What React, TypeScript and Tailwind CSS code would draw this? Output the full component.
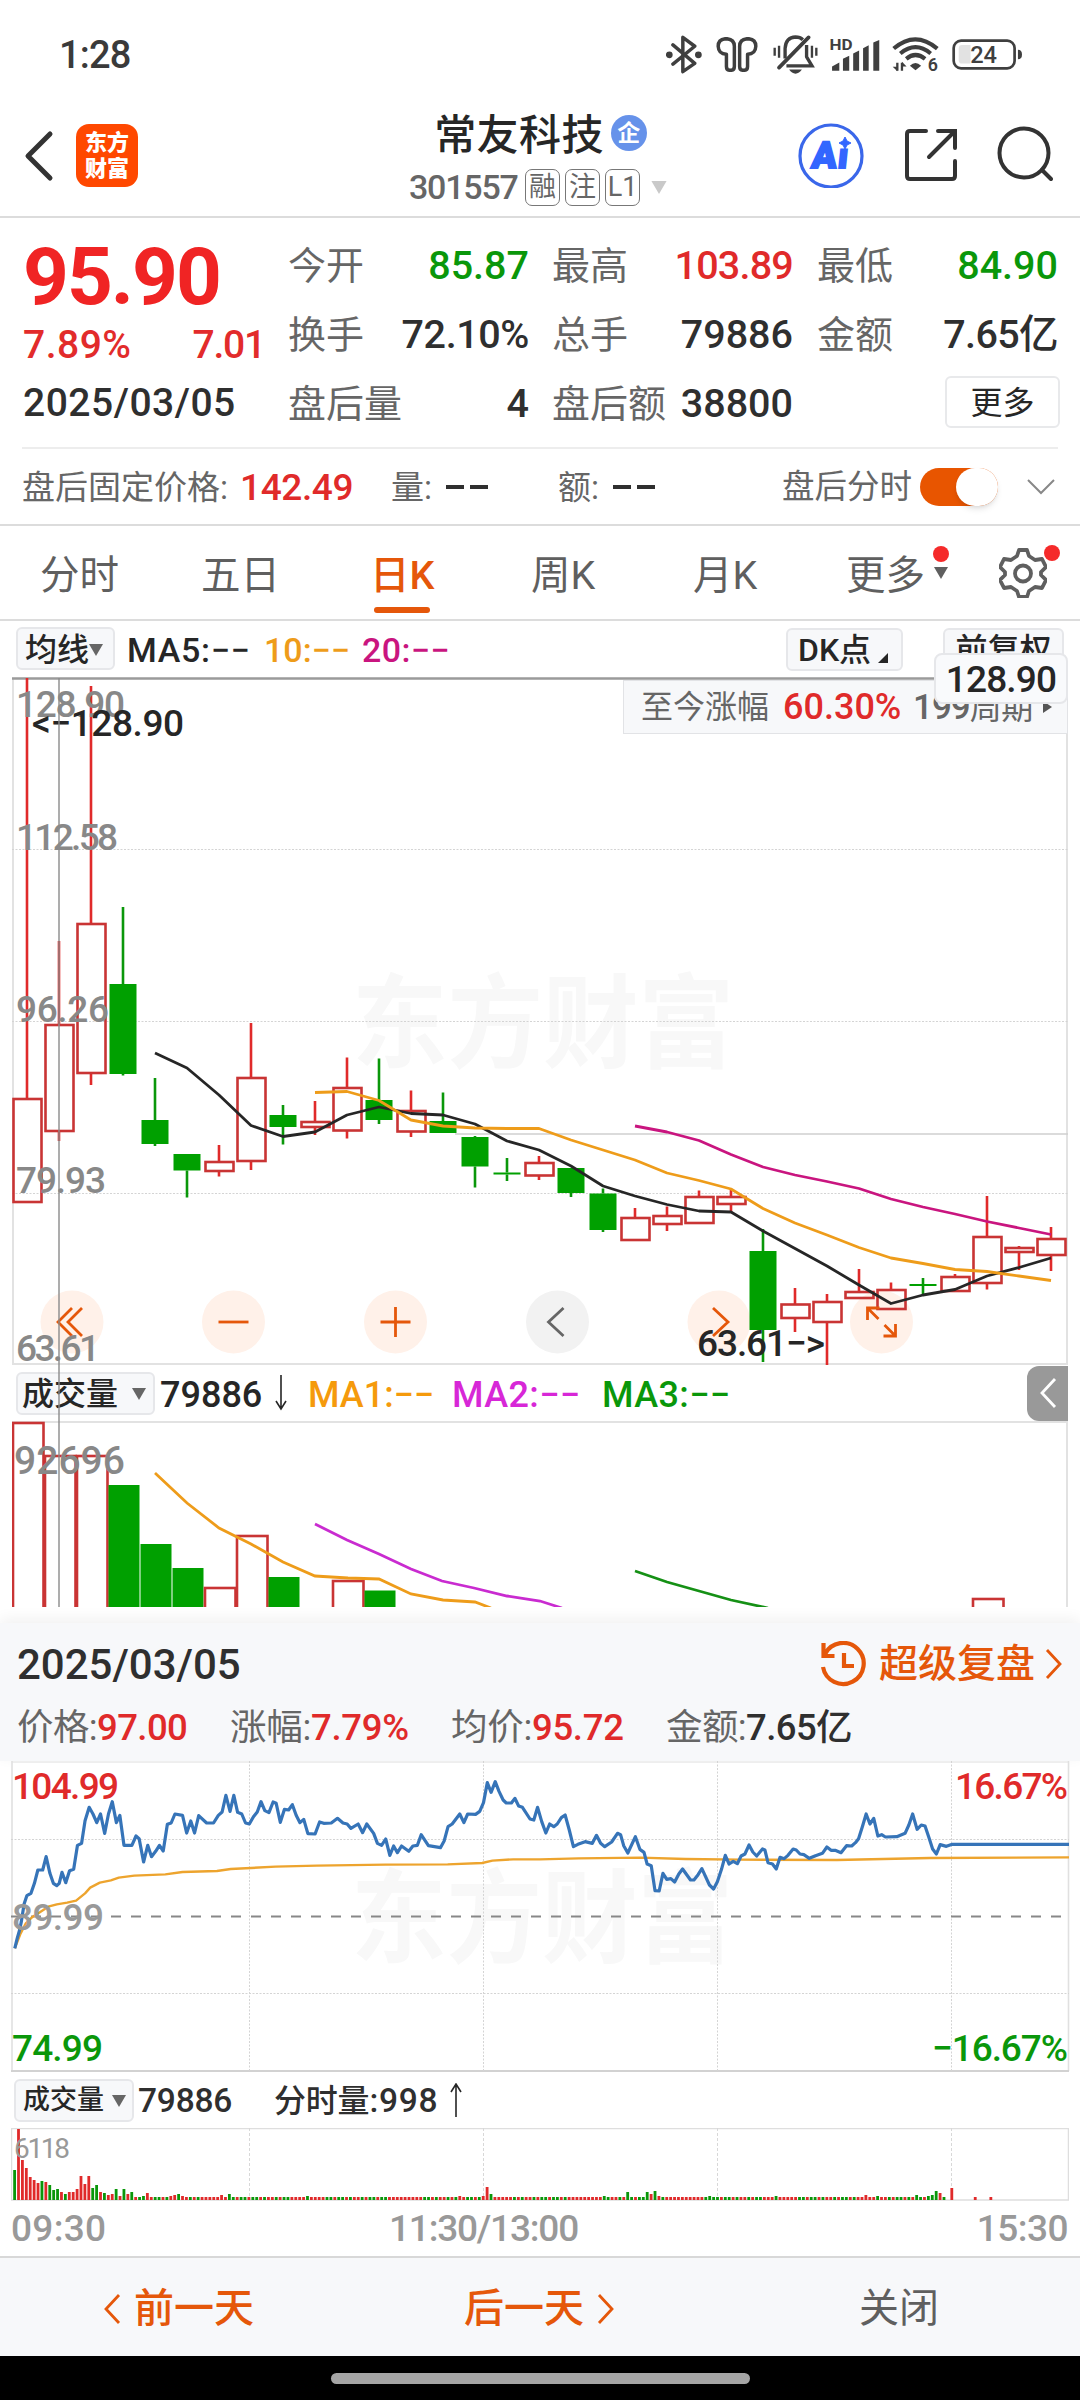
import type { ReactNode } from "react";
import { clsx } from "clsx";

const RED = "#e02a2a";
const GREEN = "#0a970a";

type Trend = "r" | "g";

// trend, high, body top, body bottom, low (px from the top of the plot)
const candles: [Trend, number, number, number, number][] = [
  ["r", 0, 421, 524, 524],
  ["r", 263, 347, 453, 463],
  ["r", 8, 246, 395, 407],
  ["g", 229, 306, 396, 397.5],
  ["g", 400, 442, 466, 468],
  ["g", 476, 476, 492.5, 519.5],
  ["r", 467, 484, 493, 498.5],
  ["r", 345, 400, 483, 492],
  ["g", 427, 437, 449, 466.5],
  ["r", 423, 444, 449, 457],
  ["r", 379.5, 410, 452.5, 460.5],
  ["g", 380.5, 422, 442, 446],
  ["r", 412.5, 433, 453.5, 459],
  ["g", 414.5, 443, 455, 455],
  ["g", 458, 459, 488.5, 509.5],
  ["g", 480, 494.5, 496.5, 503],
  ["r", 478, 485, 497.5, 502],
  ["g", 490, 490, 515, 519],
  ["g", 510.5, 515.5, 552, 554],
  ["r", 530, 540, 562, 562],
  ["r", 528.5, 538, 546, 553],
  ["r", 512.5, 519, 545, 545],
  ["r", 511, 519, 526, 534],
  ["g", 551, 573, 652, 684],
  ["r", 610, 626.5, 640, 654],
  ["r", 616, 624, 644, 687],
  ["r", 591, 614, 620, 620],
  ["r", 604.5, 612, 631, 631],
  ["g", 600, 606, 608, 616.5],
  ["r", 596, 599, 613, 613],
  ["r", 518, 559, 605, 611.5],
  ["r", 568, 570, 574, 592],
  ["r", 549, 561, 577, 593],
];

const ma5 = [
  375, 390, 417, 447.5, 458.5, 454, 437, 429, 435.5, 437, 446, 463, 472, 488,
  508, 518, 526.5, 533, 534, 553, 570.5, 588, 607, 625.5, 617, 611.5, 598,
  589.5, 580,
];
const ma10 = [
  414.5, 413.5, 422.5, 442, 448, 450, 450.5, 450.5, 462, 472, 482, 495, 502.5,
  511, 530.5, 545, 557, 569.5, 580, 585.5, 591.5, 593.5, 598, 602.5,
];
const ma20 = [
  448, 454, 462.5, 476.5, 489, 497, 503.5, 510.5, 521, 529, 536, 543.5, 550,
  556.5,
];

const volumes: [number, Trend, number][] = [
  [0, "r", 2],
  [1, "r", 35],
  [2, "r", 35],
  [3, "g", 64],
  [4, "g", 123],
  [5, "g", 147],
  [6, "r", 167],
  [7, "r", 115],
  [8, "g", 156],
  [10, "r", 160],
  [11, "g", 169.5],
  [30, "r", 178],
];

const minutePrice =
  "43,595 50,565 57,540 62,515 70,462 78,437 90,430 100,400 110,360 124,360 134,320 145,370 155,400 165,407 172,400 180,367 191,398 202,362 214,358 225,286 237,280 247,212 259,172 270,192 281,218 292,192 304,250 315,192 326,155 338,218 348,196 360,286 383,286 395,258 404,266 417,336 429,286 440,320 452,304 463,286 474,303 486,223 497,219 508,192 530,196 542,249 554,213 565,249 577,197 600,219 620,219 634,196 645,186 656,136 668,184 679,136 690,187 702,192 713,219 724,222 736,200 747,186 758,155 769,182 781,188 793,156 802,160 814,217 826,178 838,180 849,164 860,196 871,218 882,208 894,251 915,252 928,216 940,220 962,219 980,205 996,219 1008,222 1019,235 1040,222 1053,248 1065,222 1085,250 1096,280 1108,286 1120,267 1132,316 1143,288 1154,308 1166,288 1187,304 1199,288 1212,286 1223,254 1244,287 1279,293 1290,272 1301,230 1313,222 1335,192 1347,218 1358,192 1381,193 1393,184 1404,158 1415,98 1426,127 1438,95 1449,124 1461,150 1470,159 1485,159 1495,145 1506,168 1517,172 1539,207 1550,210 1561,172 1573,215 1585,249 1596,222 1608,230 1618,222 1630,203 1641,195 1653,240 1665,290 1678,283 1699,275 1720,280 1732,256 1744,280 1756,290 1776,276 1793,250 1802,254 1811,287 1823,309 1845,260 1858,298 1870,307 1879,342 1891,347 1902,422 1914,423 1925,370 1936,388 1948,386 1959,396 1971,372 1982,357 2005,390 2015,390 2027,374 2038,356 2060,405 2072,417 2083,395 2095,358 2106,316 2117,342 2129,334 2141,341 2152,318 2163,312 2175,285 2186,306 2197,318 2214,297 2221,300 2230,338 2243,342 2254,357 2265,322 2277,326 2288,316 2303,297 2312,300 2323,312 2334,314 2350,325 2368,317 2388,310 2401,291 2413,301 2425,301 2442,308 2458,287 2473,288 2484,278 2493,266 2504,230 2515,192 2526,222 2537,205 2549,258 2560,254 2571,261 2604,260 2628,250 2639,225 2650,192 2663,238 2675,225 2686,228 2697,262 2708,297 2719,312 2730,284 2748,289 2765,283 3104,283";
const minuteAverage =
  "43,595 60,550 75,520 95,500 118,485 140,470 165,463 195,458 221,452 247,430 262,413 290,398 322,391 345,383 390,377 480,373 530,366 630,363 670,357 800,350 920,347 1120,344 1300,343 1400,339 1430,332 1490,328 1568,328 1680,325 1860,323 1990,327 2150,329 2430,330 2700,324 3104,322";

const openingVolume: [number, Trend][] = [
  [30, "g"], [71, "r"], [40, "r"], [32, "r"], [23, "r"], [20, "r"], [17, "r"],
  [19, "g"], [18, "r"], [15, "g"], [10, "g"], [11, "g"], [8, "r"], [6, "g"],
  [8, "r"], [8, "r"], [11, "r"], [24, "r"], [16, "r"], [24, "r"], [12, "g"],
  [15, "g"], [8, "r"], [7, "g"], [5, "r"], [6, "r"], [11, "g"], [4, "r"],
  [11, "g"], [6, "r"], [8, "g"], [3, "r"], [3, "g"], [4, "g"], [7, "r"],
];
const volumeSpikes: Record<number, [number, Trend]> = {
  40: [4, "r"], 41: [5, "r"], 42: [6, "g"], 43: [4, "r"], 53: [5, "r"],
  55: [6, "g"], 75: [4, "g"], 114: [4, "r"], 120: [4, "r"], 121: [13, "r"],
  122: [6, "g"], 151: [4, "g"], 157: [8, "g"], 162: [8, "g"], 163: [6, "r"],
  164: [9, "g"], 165: [4, "r"], 178: [4, "g"], 195: [4, "g"], 218: [5, "r"],
  221: [4, "g"], 231: [5, "g"], 234: [4, "g"], 235: [5, "g"], 236: [9, "g"],
  237: [7, "r"], 238: [3, "g"], 240: [12, "r"], 246: [3, "r"], 250: [3, "r"],
};

const minuteVolumes = Array.from({ length: 251 }, (_, i): [number, Trend] => {
  if (i < openingVolume.length) return openingVolume[i];
  if (volumeSpikes[i]) return volumeSpikes[i];
  if (i > 238) return [0, "r"];
  return [3, (i * 7) % 11 < 5 || (i >> 3) % 3 === 0 ? "r" : "g"];
});

const x = (i: number) => 15 + 32 * i;
const color = (t: Trend) => (t === "r" ? RED : GREEN);
const line = (from: number, ys: number[]) =>
  ys.map((y, i) => `${x(from + i)},${y}`).join(" ");

function Caret({ className }: { className?: string }) {
  return (
    <svg viewBox="0 0 14 12" className={clsx("shrink-0", className ?? "h-3 w-3.5 text-[#666]")}>
      <path d="M0 0h14L7 12z" fill="currentColor" />
    </svg>
  );
}

function Chevron({ left, className }: { left?: boolean; className?: string }) {
  return (
    <svg
      viewBox="0 0 18 30"
      className={clsx("h-[30px] w-[18px] shrink-0", className)}
      fill="none"
      stroke="currentColor"
      strokeWidth="2.8"
    >
      <path d={left ? "M16 1L3 15l13 14" : "M2 1l13 14L2 29"} />
    </svg>
  );
}

function StatusIcons() {
  return (
    <div className="flex items-center text-[#3f3f3f]">
      {/* Bluetooth */}
      <svg viewBox="76 42 107 118" className="h-[39px] w-9" fill="none" stroke="currentColor" strokeWidth="10.5">
        <path d="M96 72l66 56-36 25V49l36 27-66 54" strokeLinejoin="round" strokeLinecap="round" />
        <circle cx="85" cy="102" r="5" fill="currentColor" />
        <circle cx="173" cy="102" r="5" fill="currentColor" />
      </svg>
      {/* Earbuds */}
      <svg viewBox="226 50 126 106" className="ml-[14px] h-[35px] w-[42px]" fill="none" stroke="currentColor" strokeWidth="10.5">
        <path d="M257 102v37q0 12 12 12t12-12V78q0-22-25-23-24 1-24 23 1 24 25 24z" strokeLinejoin="round" />
        <path d="M321 102v37q0 12-12 12t-12-12V78q0-22 25-23 24 1 24 23-1 24-25 24z" strokeLinejoin="round" />
      </svg>
      {/* Muted bell */}
      <svg viewBox="398 46 134 116" className="ml-[15px] h-[39px] w-[45px]" fill="none" stroke="currentColor" strokeWidth="10">
        <path d="M434 116V86q2-33 31-34 14 0 22 8M498 76v35l16 27h-76" />
        <path d="M416 143l88-90" strokeWidth="11" strokeLinecap="round" />
        <path d="M403 84v24M416 78v36M514 78v36M527 84v24" strokeWidth="7" />
        <path d="M446 149h38q-8 12-19 12t-19-12z" fill="currentColor" stroke="none" />
      </svg>
      {/* Signal */}
      <svg viewBox="566 52 152 100" className="ml-[11px] h-[33px] w-[51px] overflow-visible" fill="currentColor">
        <text x="566" y="89" fontSize="46" fontWeight="700" textLength="70" lengthAdjust="spacingAndGlyphs">
          HD
        </text>
        <path d="M574 151v-13l22-12v25zM607 151v-36l19-9v45zM638 151V99l18-9v61zM668 151V83l17-9v77zM699 151V66l18-8v93z" />
      </svg>
      {/* Wi-Fi 6 */}
      <svg viewBox="754 50 142 112" className="ml-[12px] h-[37px] w-[47px] overflow-visible" fill="none" stroke="currentColor" strokeWidth="12.5">
        <path d="M759 88q65-56 132 0M779 103q46-38 92 0M797 119q28-23 57 0" />
        <path d="M808 140q17-16 34 0l-17 14z" fill="currentColor" stroke="none" />
        <path d="M770 131v24M784 131v24" strokeWidth="7" />
        <path d="M770 157l-14-14h14zM784 128l14 14h-14z" fill="currentColor" stroke="none" />
        <text x="862" y="157" fontSize="54" fontWeight="600" fill="currentColor" stroke="none">
          6
        </text>
      </svg>
      {/* Battery */}
      <svg viewBox="938 56 208 92" className="ml-[13px] h-[31px] w-[70px]" fill="none" stroke="currentColor" strokeWidth="8">
        <rect x="943" y="61" width="181" height="82" rx="22" />
        <path d="M958 84q0-10 10-10h25v55h-25q-10 0-10-10z" fill="#e2e2e2" stroke="none" />
        <path d="M1134 88q12 0 12 14t-12 14z" fill="currentColor" stroke="none" />
        <text x="992" y="128" fontSize="70" fontWeight="500" fill="currentColor" stroke="none" textLength="80" lengthAdjust="spacingAndGlyphs">
          24
        </text>
      </svg>
    </div>
  );
}

function StatusBar() {
  return (
    <div className="flex h-[108px] items-center justify-between pr-[58px] pl-[59px]">
      <span className="pt-[2px] text-[38px] font-medium tracking-[-0.8px] text-[#3a3a3a]">1:28</span>
      <StatusIcons />
    </div>
  );
}

function Tag({ children }: { children: ReactNode }) {
  return (
    <span className="flex h-[37px] w-[35px] items-center justify-center rounded-[7px] border border-[#777] text-[27px] leading-none text-[#666]">
      {children}
    </span>
  );
}

function Header() {
  return (
    <header className="flex h-[110px] border-b-2 border-[#dcdcdc]">
      <div className="flex w-[390px] items-start pt-4 pl-6">
        <svg viewBox="0 0 30 52" className="mt-[6px] h-[52px] w-[30px]" fill="none" stroke="#333" strokeWidth="5" strokeLinecap="round" strokeLinejoin="round">
          <path d="M26 4L4 26l22 22" />
        </svg>
        <div className="ml-[22px] flex h-[63px] w-[62px] flex-col items-center justify-center rounded-[13px] bg-[#ff4800] text-[22px] leading-[26px] font-black text-white">
          <span>东方</span>
          <span>财富</span>
        </div>
      </div>

      <div className="flex w-[300px] flex-col items-center">
        <div className="mt-[5px] flex h-[46px] items-center gap-[7px] pl-[1px]">
          <h1 className="text-[42px] leading-none font-medium tracking-[0.4px] text-[#262626]">常友科技</h1>
          <span className="mb-[6px] flex h-9 w-9 items-center justify-center rounded-full bg-[#6692ea] text-[23px] leading-none font-bold text-white">
            企
          </span>
        </div>
        <div className="mt-[9px] -ml-[2px] flex h-[38px] items-center gap-[5px]">
          <span className="mr-[3px] w-[108px] text-[34px] leading-none font-medium tracking-[-1.2px] text-[#666]">301557</span>
          <Tag>融</Tag>
          <Tag>注</Tag>
          <Tag>L1</Tag>
          <Caret className="ml-[4px] h-[13px] w-[20px] text-[#c9c9c9]" />
        </div>
      </div>

      <div className="flex flex-1 items-start pt-[14px] pl-[108px]">
        <svg viewBox="0 0 66 66" className="h-[66px] w-[66px]">
          <circle cx="33" cy="34" r="31" fill="none" stroke="#3a67ea" strokeWidth="3.2" />
          <g transform="skewX(-6)" fill="#3366ff" stroke="#3366ff" strokeWidth="2" fontSize="37" fontWeight="900">
            <text x="17.5" y="46" textLength="25" lengthAdjust="spacingAndGlyphs">
              A
            </text>
            <text x="44" y="46.5" fontSize="35">
              ı
            </text>
          </g>
          <path d="M47 15l2 4 4 2-4 2-2 4-2-4-4-2 4-2z" fill="#3366ff" stroke="#3366ff" />
        </svg>
        <svg viewBox="0 0 54 54" className="mt-[5px] ml-[40px] h-[54px] w-[54px]" fill="none" stroke="#333" strokeWidth="4" strokeLinecap="round">
          <path d="M22 4H6q-3 0-3 3v42q0 3 3 3h42q3 0 3-3V34M34 4h17v17M50 5L25 30" />
        </svg>
        <svg viewBox="0 0 58 58" className="mt-[3px] ml-[37px] h-[58px] w-[58px]" fill="none" stroke="#333" strokeWidth="4" strokeLinecap="round">
          <circle cx="29" cy="28" r="24.5" />
          <path d="M47 45l9 9" />
        </svg>
      </div>
    </header>
  );
}

function Quote({ label, value, className }: { label: string; value: string; className?: string }) {
  return (
    <div className="flex h-[69px] items-center justify-between whitespace-nowrap">
      <span className="text-[38px] leading-none text-[#666]">{label}</span>
      <span className={clsx("text-[39.5px] leading-none font-medium", className ?? "text-[#2f2f2f]")}>{value}</span>
    </div>
  );
}

function QuotePanel() {
  return (
    <section className="border-b-2 border-[#dcdcdc]">
      <div className="flex h-[229px] pt-[13px] pl-[23px]">
        <div className="w-[242px] font-medium text-[#e22b2b]">
          <div className="flex h-[90px] items-center pt-[2px] text-[80px] leading-none font-bold tracking-[-2px] text-[#f02424]">95.90</div>
          <div className="flex h-12 items-center justify-between text-[39px] leading-none">
            <span className="tracking-[0.5px]">7.89%</span>
            <span className="tracking-[-1.2px]">7.01</span>
          </div>
          <div className="flex h-[68px] items-center text-[39px] leading-none tracking-[0.5px] text-[#2f2f2f]">2025/03/05</div>
        </div>
        <div className="ml-[23px] w-[241px]">
          <Quote label="今开" value="85.87" className="text-[#0a970a]" />
          <Quote label="换手" value="72.10%" className="tracking-[-0.4px] text-[#2f2f2f]" />
          <Quote label="盘后量" value="4" />
        </div>
        <div className="ml-[23px] w-[241px]">
          <Quote label="最高" value="103.89" className="tracking-[-0.8px] text-[#e02a2a]" />
          <Quote label="总手" value="79886" />
          <Quote label="盘后额" value="38800" />
        </div>
        <div className="ml-6 w-[241px]">
          <Quote label="最低" value="84.90" className="text-[#0a970a]" />
          <Quote label="金额" value="7.65亿" className="tracking-[-0.6px] text-[#2f2f2f]" />
          <div className="flex h-[65px] items-center justify-end">
            <button className="-mr-[2px] h-[52px] w-[115px] rounded-md border-2 border-[#e8e9eb] pt-[2px] text-[32px] leading-none text-[#262626]">更多</button>
          </div>
        </div>
      </div>

      <div className="mx-[22px] flex h-[77px] items-center border-t-2 border-[#ededed] pt-[1px] text-[33px] leading-none whitespace-nowrap text-[#666]">
        <span className="w-[218px]">盘后固定价格:</span>
        <span className="w-[151px] text-[37px] font-medium tracking-[-0.4px] text-[#e02a2a]">142.49</span>
        <span className="w-[55px]">量:</span>
        <Dashes className="w-[112px]" />
        <span className="w-[55px]">额:</span>
        <Dashes className="w-[169px]" />
        <span className="w-[138px] text-[32.5px]">盘后分时</span>
        <span className="relative h-[38px] w-[78px] rounded-full bg-[#e85500]">
          <span className="absolute top-0 right-0 h-[38px] w-[42px] rounded-full bg-white shadow-md" />
        </span>
        <svg viewBox="0 0 28 16" className="ml-[29px] h-4 w-7" fill="none" stroke="#888" strokeWidth="2">
          <path d="M1 1l13 13L27 1" />
        </svg>
      </div>
    </section>
  );
}

function Dashes({ className }: { className?: string }) {
  return (
    <span className={clsx("flex gap-[6px]", className)}>
      <i className="h-[3.5px] w-[18px] bg-[#2f2f2f]" />
      <i className="h-[3.5px] w-[18px] bg-[#2f2f2f]" />
    </span>
  );
}

function RedDot({ className }: { className?: string }) {
  return <span className={clsx("absolute h-4 w-4 rounded-full bg-[#f52a2a]", className)} />;
}

function PeriodTabs() {
  const tabs = [
    { name: "分时", width: "w-[161px]" },
    { name: "五日", width: "w-[169px]" },
    { name: "日K", width: "w-[161px]", active: true },
    { name: "周K", width: "w-[162px]" },
    { name: "月K", width: "w-[153px]" },
  ];
  return (
    <nav className="flex h-[95px] items-center border-b-2 border-[#dcdcdc] pl-10 text-[39.5px] leading-none text-[#5f5f5f]">
      {tabs.map((tab) => (
        <div
          key={tab.name}
          className={clsx("relative h-[93px] pt-[30px]", tab.width, tab.active && "font-medium text-[#e5570a]")}
        >
          {tab.name}
          {tab.active && <span className="absolute bottom-[6px] left-1 h-[6px] w-14 rounded-full bg-[#e5570a]" />}
        </div>
      ))}
      <div className="relative flex h-[93px] w-[152px] pt-[30px]">
        更多
        <Caret className="mt-[11px] ml-[9px] h-3 w-3.5 text-[#5f5f5f]" />
        <RedDot className="top-[20px] left-[87px]" />
      </div>
      <div className="relative">
        <svg viewBox="0 0 48 50" className="ml-px h-[50px] w-12" fill="none" stroke="#5f5f5f" strokeWidth="3.8" strokeLinejoin="round">
          <path d="M20 2h8l2 6 6 4 7-1 4 8-5 5v3l5 5-4 8-7-1-6 4-2 6h-8l-2-6-6-4-7 1-4-8 5-5v-3l-5-5 4-8 7 1 6-4z" />
          <circle cx="24" cy="25.5" r="8" />
        </svg>
        <RedDot className="-top-[3px] left-[46px]" />
      </div>
    </nav>
  );
}

function ToolButton({ children, className }: { children: ReactNode; className?: string }) {
  return (
    <button
      className={clsx(
        "flex h-[43px] items-center rounded-md border-2 border-[#e6e7ea] bg-[#f7f8fa] leading-none whitespace-nowrap text-[#262626]",
        className
      )}
    >
      {children}
    </button>
  );
}

function AverageBar() {
  return (
    <div className="flex h-[57px] items-start pt-[6px] pr-4 pl-4 text-[32px] font-medium whitespace-nowrap">
      <ToolButton className="w-[99px] pt-[2px] pl-[7px]">
        均线
        <Caret />
      </ToolButton>
      <div className="flex h-[46px] items-center text-[34px] leading-none">
        <span className="ml-[12px] w-[137px] tracking-[0.7px] text-[#262626]">MA5:−−</span>
        <span className="w-[98px] text-[#ee9c1a]">10:−−</span>
        <span className="tracking-[0.4px] text-[#c9157f]">20:−−</span>
      </div>
      <ToolButton className="mt-[1px] ml-auto w-[117px] pt-[1px] pl-[10px]">
        DK点
        <svg viewBox="0 0 10 10" className="mt-4 ml-[7px] h-2.5 w-2.5">
          <path d="M10 0v10H0z" fill="#262626" />
        </svg>
      </ToolButton>
      <ToolButton className="mt-[1px] ml-10 w-[121px] justify-center">前复权</ToolButton>
    </div>
  );
}

const roundButtons: { cx: number; icon: string; muted?: boolean }[] = [
  { cx: 60, icon: "M0-14L-14 0L0 14M10-14L-4 0L10 14" },
  { cx: 221.5, icon: "M-15 0H15" },
  { cx: 383.5, icon: "M-15 0H15M0-15V15" },
  { cx: 545.5, icon: "M6-14L-9 0L6 14", muted: true },
  { cx: 707, icon: "M-6-14L9 0L-6 14" },
  { cx: 869.5, icon: "M-14-2V-14H-2M-14-14L-3-3M14 2V14H2M14 14L3 3" },
];

function Watermark({ y }: { y: number }) {
  return (
    <text x="340" y={y} fontSize="102" fontWeight="700" fill="#f8f8f8" textLength="382" lengthAdjust="spacingAndGlyphs">
      东方财富
    </text>
  );
}

function CandleChart() {
  const axis: [string, number, number][] = [
    ["128.90", 39, 109],
    ["112.58", 172, 102],
    ["96.26", 344, 93],
    ["79.93", 515, 90],
    ["63.61", 683, 84],
  ];
  return (
    <div className="relative mx-3 h-[687px]">
      <svg viewBox="0 0 1056 687" className="h-full w-full overflow-visible" fontSize="37" fontWeight="500">
        <Watermark y={382} />
        <path d="M1 0V686H1055V0" fill="none" stroke="#e2e2e2" strokeWidth="2" />
        <path d="M0 0.5H1056" stroke="#9a9a9a" strokeWidth="2.5" />
        <path d="M0 171.5H1056M0 343.5H1056M0 515.5H1056" stroke="#d4d4d4" strokeDasharray="2 1.5" />
        <path d="M443 456H1056" stroke="#cfcfcf" strokeWidth="1.6" />
        {roundButtons.map(({ cx, muted }) => (
          <circle key={cx} cx={cx} cy="644" r="31.5" fill={muted ? "#f2f2f2" : "#fff1e9"} />
        ))}
        {candles.map(([trend, high, top, bottom, low], i) => (
          <g key={i} stroke={color(trend)} strokeWidth="2.6">
            <path d={`M${x(i)} ${high}V${top}M${x(i)} ${bottom}V${low}`} />
            {trend === "g" ? (
              <rect x={x(i) - 13.5} y={top} width="27" height={bottom - top} fill="#00a000" stroke="none" />
            ) : (
              <rect x={x(i) - 13.5} y={top} width="28" height={bottom - top} fill="none" stroke="#c93434" />
            )}
          </g>
        ))}
        <g fill="none" strokeWidth="2.8" strokeLinejoin="round">
          <polyline points={line(4, ma5)} stroke="#262626" />
          <polyline points={line(9, ma10)} stroke="#ee9c1a" />
          <polyline points={line(19, ma20)} stroke="#c9157f" />
        </g>
        {roundButtons.map(({ cx, icon, muted }) => (
          <path
            key={cx}
            transform={`translate(${cx} 644)`}
            d={icon}
            fill="none"
            stroke={muted ? "#666" : "#e5570a"}
            strokeWidth="2.8"
          />
        ))}
        {axis.map(([label, y, width]) => (
          <text key={label} x="4" y={y} fill="#888" textLength={width}>
            {label}
          </text>
        ))}
        <g fill="#262626">
          <text x="20" y="58" textLength="152">{"<−128.90"}</text>
          <text x="685" y="678" textLength="128">{"63.61−>"}</text>
        </g>
      </svg>

      <div className="absolute top-[2px] right-0 flex h-[54px] w-[445px] items-center border border-[#e2e3e6] bg-[#f7f8fa] pl-[17px] text-[32px] leading-none whitespace-nowrap text-[#666]">
        <span className="w-[142px]">至今涨幅</span>
        <span className="w-[130px] text-[36px] font-medium text-[#e02a2a]">60.30%</span>
        <span className="text-[32px] tracking-[-0.4px]">
          <span className="text-[35px] font-medium tracking-[-1px]">199</span>周期
        </span>
        <svg viewBox="0 0 9 12" className="ml-[10px] h-3 w-[9px]">
          <path d="M0 0l9 6-9 6z" fill="#555" />
        </svg>
      </div>
      <div className="absolute -top-[25px] right-0 flex h-[51px] w-[134px] items-center justify-center rounded-lg border-2 border-[#e6e7ea] bg-[#f9fafc] pt-[2px] text-[37px] leading-none font-medium tracking-[-0.8px] text-[#262626]">
        128.90
      </div>
      {/* Crosshair runs through the volume chart too */}
      <div className="absolute top-0 left-[46px] z-10 h-[929px] w-[2px] bg-[#8a8a8a]/70" />
    </div>
  );
}

function VolumeBar() {
  return (
    <div className="flex h-14 items-center pr-3 pl-4 text-[36px] leading-none font-medium whitespace-nowrap">
      <ToolButton className="w-[139px] justify-between pt-[2px] pr-[7px] pl-1 text-[32px]">
        成交量
        <Caret />
      </ToolButton>
      <span className="mt-[3px] ml-[5px] w-[115px] text-[#262626]">79886</span>
      <svg viewBox="0 0 12 36" className="h-9 w-3" fill="none" stroke="#262626" strokeWidth="1.6">
        <path d="M6 0v34M1 26l5 8 5-8" />
      </svg>
      <div className="mt-[3px] ml-[21px] flex">
        <span className="w-[144px] text-[#f59a0c]">MA1:−−</span>
        <span className="w-[150px] tracking-[0.4px] text-[#d727d7]">MA2:−−</span>
        <span className="tracking-[0.4px] text-[#0a970a]">MA3:−−</span>
      </div>
      <button className="ml-auto flex h-[55px] w-[41px] items-center justify-center rounded-l-xl bg-[#999] text-white">
        <Chevron left className="h-[26px]" />
      </button>
    </div>
  );
}

function VolumeChart() {
  return (
    <svg viewBox="0 0 1056 186" className="mx-3 block h-[186px] w-[1056px]">
      <path d="M1 186V1H1055V186" fill="none" stroke="#e2e2e2" strokeWidth="2" />
      {volumes.map(([i, trend, top]) => (
        <rect
          key={i}
          x={32 * i + (trend === "g" ? 0.5 : 1)}
          y={top}
          width={trend === "g" ? 31 : 30.5}
          height="220"
          fill={trend === "g" ? "#00a000" : "#fff"}
          stroke={trend === "g" ? "none" : "#c93434"}
          strokeWidth="2.6"
        />
      ))}
      <g fill="none" strokeWidth="2.8">
        <polyline stroke="#ee9c1a" points="143,52 175,82 207,107 239,123 271,141 303,155 336,157 367,158 399,173 431,179 463,181 479,187" />
        <polyline stroke="#c92bd0" points="303,103 335,119 367,133 399,148 430,160 462,167 495,175 528,180 550,187" />
        <polyline stroke="#159015" points="623,150 655,161 687,170 719,179 756,187" />
      </g>
      <text x="2" y="53" fontSize="39" fontWeight="500" fill="#888" textLength="111">
        92696
      </text>
    </svg>
  );
}

function Stat({ label, value, className }: { label: string; value: string; className?: string }) {
  return (
    <div className={clsx("flex items-center", className)}>
      <span className="font-normal text-[#666]">{label}:</span>
      {value}
    </div>
  );
}

function ReplayHeader() {
  return (
    <div className="h-[138px] bg-[#f7f8fa] shadow-[0_-4px_14px_rgba(0,0,0,0.06)]">
      <div className="flex h-[81px] items-center justify-between pt-[1px] pr-[17px] pl-[17px]">
        <span className="pt-[1px] text-[42px] leading-none font-medium text-[#2f2f2f]">2025/03/05</span>
        <div className="flex items-center text-[39px] leading-none font-medium text-[#e5570a]">
          <svg viewBox="0 0 46 46" className="mr-[13px] h-[46px] w-[46px]" fill="none" stroke="currentColor" strokeWidth="4.2">
            <path d="M5 13A20.5 20.5 0 1 1 3 26M3.5 2v13h11M24 12v13h10" />
          </svg>
          超级复盘
          <Chevron className="ml-[10px] h-7" />
        </div>
      </div>
      <div className="flex h-[48px] items-center pl-[17px] text-[36.5px] leading-none font-medium tracking-[-0.3px] whitespace-nowrap text-[#e02a2a]">
        <Stat label="价格" value="97.00" className="w-[213px] tracking-[-0.6px]" />
        <Stat label="涨幅" value="7.79%" className="w-[221px]" />
        <Stat label="均价" value="95.72" className="w-[215px]" />
        <Stat label="金额" value="7.65亿" className="tracking-[-0.6px] text-[#2f2f2f]" />
      </div>
    </div>
  );
}

function MinuteChart() {
  return (
    <div className="relative z-10 mx-[11px] h-[311px] bg-white">
      <svg viewBox="0 0 1058 310" className="absolute inset-0 h-[310px] w-full overflow-visible">
        <Watermark y={194} />
        <path d="M0.5 1H1058" stroke="#dedede" />
        <path d="M1 0V310M1057.5 0V310" stroke="#e0e0e0" strokeWidth="1.6" />
        <path d="M0 310H1058" stroke="#d2d2d2" strokeWidth="2" />
        <path d="M0 78.5H1058M0 232.5H1058M238.5 0V310M472.5 0V310M706.5 0V310M940.5 0V310" stroke="#d4d4d4" strokeDasharray="2 1.5" />
        <path d="M0 155.5H1058" stroke="#888" strokeWidth="2" strokeDasharray="10 10" />
      </svg>
      {/* Price and average series */}
      <svg viewBox="32 33 3072 930" preserveAspectRatio="none" className="absolute inset-0 h-[310px] w-full" fill="none" strokeLinejoin="round">
        <polyline points={minuteAverage} stroke="#eda42e" strokeWidth="2.4" vectorEffect="non-scaling-stroke" />
        <polyline points={minutePrice} stroke="#3674b8" strokeWidth="3.2" vectorEffect="non-scaling-stroke" />
      </svg>
      <svg viewBox="0 0 1058 310" className="absolute inset-0 h-[310px] w-full" fontSize="37" fontWeight="500">
        <text x="1" y="38" fill={RED} textLength="107">104.99</text>
        <text x="1" y="169" fill="#999" textLength="92">89.99</text>
        <text x="1" y="300" fill={GREEN} textLength="91">74.99</text>
        <text x="944" y="38" fill={RED} textLength="113">16.67%</text>
        <text x="921" y="300" fill={GREEN} textLength="136">−16.67%</text>
      </svg>
    </div>
  );
}

function MinuteVolume() {
  return (
    <>
      <div className="flex h-14 items-center pl-[14px] text-[33.5px] leading-none font-medium tracking-[-0.2px] whitespace-nowrap text-[#2f2f2f]">
        <ToolButton className="w-[120px] justify-between pt-[1px] pr-[6px] pl-[7px] text-[27px] tracking-normal">
          成交量
          <Caret />
        </ToolButton>
        <span className="ml-[4px] w-[136px] pt-[2px]">79886</span>
        <span className="pt-[2px]">
          <span className="text-[32px]">分时量</span>
          <span className="tracking-[0.7px]">:998</span>
        </span>
        <svg viewBox="0 0 12 34" className="ml-3 h-[34px] w-3" fill="none" stroke="#262626" strokeWidth="1.6">
          <path d="M6 34V1M1 9l5-8 5 8" />
        </svg>
      </div>
      <svg viewBox="0 0 1058 73" className="mx-[11px] block h-[73px] w-[1058px]">
        <rect x="0.5" y="0.5" width="1057" height="71.5" fill="none" stroke="#dedede" strokeWidth="1.5" />
        <path d="M238.5 0V72M472.5 0V72M706.5 0V72M940.5 0V72" stroke="#d8d8d8" strokeDasharray="3 2" />
        {minuteVolumes.map(([height, trend], i) => (
          <rect key={i} x={2.2 + 3.905 * i} y={72 - height} width="2.8" height={height} fill={color(trend)} />
        ))}
        <text x="3" y="30" fontSize="28" fill="#999" textLength="56">
          6118
        </text>
      </svg>
      <div className="flex h-[57px] items-center border-b-2 border-[#d8d8d8] pr-3 pl-[11px] text-[37px] leading-none font-medium text-[#999]">
        <span className="w-[378px] tracking-[0.3px]">09:30</span>
        <span className="tracking-[-1.2px]">11:30/13:00</span>
        <span className="ml-auto tracking-[-0.5px]">15:30</span>
      </div>
    </>
  );
}

function ReplayFooter() {
  return (
    <footer>
      <div className="flex h-[98px] items-center bg-[#f7f8fa] pt-1 text-[40px] leading-none font-medium text-[#e5570a]">
        <button className="ml-[103px] flex w-[361px] items-center">
          <Chevron left className="mr-[13px]" />
          前一天
        </button>
        <button className="flex w-[395px] items-center">
          后一天
          <Chevron className="ml-[13px]" />
        </button>
        <button className="font-normal text-[#5f5f5f]">关闭</button>
      </div>
      <div className="flex h-11 justify-center bg-black pt-[17px]">
        <div className="h-[11px] w-[419px] rounded-full bg-[#a5a5a5]" />
      </div>
    </footer>
  );
}

export default function App() {
  return (
    <main className="flex h-[2400px] w-[1080px] flex-col overflow-hidden bg-white font-['Roboto','Noto_Sans_CJK_SC',sans-serif]">
      <StatusBar />
      <Header />
      <QuotePanel />
      <PeriodTabs />
      <AverageBar />
      <CandleChart />
      <VolumeBar />
      <VolumeChart />
      <div className="h-4" />
      <ReplayHeader />
      <MinuteChart />
      <MinuteVolume />
      <ReplayFooter />
    </main>
  );
}
